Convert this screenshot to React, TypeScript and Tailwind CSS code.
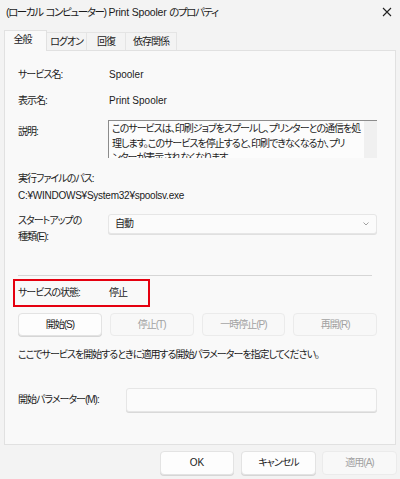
import React from 'react';

const font = "font-['Liberation_Sans','Noto_Sans_CJK_JP',sans-serif] [font-feature-settings:'palt']";
const latin = 'tracking-[0px]';

const tabs = [
  { label: '全般', w: 'w-[43px]' },
  { label: 'ログオン', w: 'w-[41px]' },
  { label: '回復', w: 'w-[40px]' },
  { label: '依存関係', w: 'w-[52px]' },
];

function Tabs() {
  return (
    <div className="mt-[6px] ml-[4px] flex h-[20px] items-end">
      {tabs.map((t, i) =>
        i === 0 ? (
          <div
            key={t.label}
            className={`${t.w} relative z-10 -mb-px flex h-[21px] items-center justify-center border border-b-0 border-[#e1e1e1] bg-[#f9f9f9] pb-[2px] pr-[6px]`}
          >
            {t.label}
          </div>
        ) : (
          <div
            key={t.label}
            className={`${t.w} -ml-px flex h-[18px] items-center justify-center border border-b-0 border-[#e4e4e4] bg-[#f3f3f3]`}
          >
            {t.label}
          </div>
        )
      )}
    </div>
  );
}

function Button({ label, disabled, className }: { label: string; disabled?: boolean; className?: string }) {
  return (
    <div
      className={`flex h-[23px] items-center justify-center rounded-[4px] border ${
        disabled
          ? 'border-[#ebebeb] bg-[#f8f8f8] text-[#a2a2a2]'
          : 'border-[#e3e3e3] bg-[#fdfdfd] text-[#1b1b1b] shadow-[0_1px_0_#d6d6d6]'
      } ${className ?? ''}`}
    >
      {label}
    </div>
  );
}

export default function App() {
  return (
    <div className={`relative h-[479px] w-[400px] overflow-hidden bg-[#f3f3f3] text-[10px] leading-[16px] tracking-[-1px] text-[#1b1b1b] ${font}`}>
      {/* title bar */}
      <div className="flex h-[24px] items-center justify-between pl-[6px] pr-[8px]">
        <span className="whitespace-pre text-[10.5px] tracking-[-1.4px]">
          (ローカル<span className={latin}> </span>コンピューター)<span className="tracking-[-0.2px]"> Print Spooler </span>のプロパティ
        </span>
        <svg width="10" height="10" viewBox="0 0 10 10" className="text-[#222]">
          <path d="M1 1 L9 9 M9 1 L1 9" stroke="currentColor" strokeWidth="1.1" />
        </svg>
      </div>

      <Tabs />

      {/* panel */}
      <div className="ml-[4px] h-[395px] w-[392px] border border-[#e1e1e1] bg-[#f9f9f9] pl-[13px] pr-[18px] pt-[11px]">
        <div className="flex h-[26px] items-center">
          <span className="w-[90px] shrink-0">サービス名:</span>
          <span className={`pl-px ${latin}`}>Spooler</span>
        </div>
        <div className="flex h-[26px] items-center">
          <span className="w-[90px] shrink-0">表示名:</span>
          <span className={`pl-px ${latin}`}>Print Spooler</span>
        </div>

        <div className="mt-[6px] flex items-start">
          <span className="w-[90px] shrink-0 pt-[5px] leading-[14px]">説明:</span>
          <div className="flex h-[38px] min-w-0 flex-1 border-l border-t border-[#8c8c8c] bg-[#fcfcfc]">
            <div className="min-w-0 flex-1 overflow-hidden whitespace-nowrap pl-[3px] pt-[1px] leading-[14.5px]">
              <div>このサービスは、印刷ジョブをスプールし、プリンターとの通信を処</div>
              <div>理します。このサービスを停止すると、印刷できなくなるか、プリ</div>
              <div>ンターが表示されなくなります</div>
            </div>
            <div className="w-[13px] shrink-0 bg-[#f0f0f0]" />
          </div>
        </div>

        <div className="mt-[13px]">実行ファイルのパス:</div>
        <div className="mt-px tracking-[-0.25px]">C:¥WINDOWS¥System32¥spoolsv.exe</div>

        <div className="mt-[9px] flex items-start">
          <div className="w-[90px] shrink-0">
            <div>スタートアップの</div>
            <div>種類(E):</div>
          </div>
          <div className="mt-px flex h-[20px] flex-1 items-center justify-between rounded-[3px] border border-[#e6e6e6] bg-[#fbfbfb] pl-[6px] pr-[7px] shadow-[0_1px_0_#e0e0e0]">
            <span>自動</span>
            <svg width="6" height="4" viewBox="0 0 6 4" className="text-[#8a8a8a]">
              <path d="M0.5 0.5 L3 3 L5.5 0.5" fill="none" stroke="currentColor" strokeWidth="0.8" />
            </svg>
          </div>
        </div>

        <div className="mr-[5px] mt-[30px] h-px bg-[#d6d6d6]" />

        <div className="relative mt-[9px] flex">
          <span className="w-[91px] shrink-0">サービスの状態:</span>
          <span>停止</span>
          <div className="absolute -left-[5px] -top-[6px] h-[28px] w-[137px] border-2 border-[#e5000f]" />
        </div>

        <div className="mt-[12px] grid grid-cols-4 gap-x-[8px]">
          <Button label="開始(S)" />
          <Button label="停止(T)" disabled />
          <Button label="一時停止(P)" disabled />
          <Button label="再開(R)" disabled />
        </div>

        <div className="mt-[11px]">ここでサービスを開始するときに適用する開始パラメーターを指定してください。</div>

        <div className="mt-[25px] flex items-center">
          <span className="w-[108px] shrink-0">開始パラメーター(M):</span>
          <div className="h-[24px] flex-1 rounded-[3px] border border-[#e6e6e6] bg-[#fbfbfb] shadow-[0_1px_0_#d9d9d9]" />
        </div>
      </div>

      {/* dialog buttons */}
      <div className="mt-[6px] flex justify-end pr-[3px]">
        <Button label="OK" className={`h-[24px] w-[74px] ${latin}`} />
        <Button label="キャンセル" className="ml-[7px] h-[24px] w-[75px]" />
        <Button label="適用(A)" disabled className="ml-[6px] h-[24px] w-[75px]" />
      </div>
    </div>
  );
}
